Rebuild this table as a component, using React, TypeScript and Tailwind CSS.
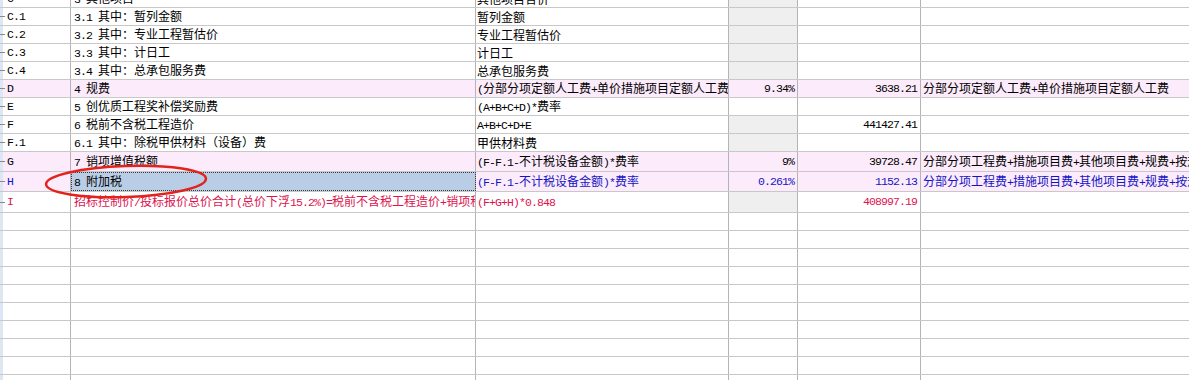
import React from 'react';

type Tone = 'normal' | 'pink' | 'blue' | 'red';

interface Row {
  code: string;
  name: string;
  base: string;
  rate: string;
  amount: string;
  remark: string;
  tone: Tone;
  gray: boolean;
  h: string;
}

const rows: Row[] = [
  { code: 'C', name: '3 其他项目', base: '其他项目合价', rate: '', amount: '', remark: '', tone: 'normal', gray: true, h: 'h-[18px]' },
  { code: 'C.1', name: '3.1 其中：暂列金额', base: '暂列金额', rate: '', amount: '', remark: '', tone: 'normal', gray: true, h: 'h-[18px]' },
  { code: 'C.2', name: '3.2 其中：专业工程暂估价', base: '专业工程暂估价', rate: '', amount: '', remark: '', tone: 'normal', gray: true, h: 'h-[18px]' },
  { code: 'C.3', name: '3.3 其中：计日工', base: '计日工', rate: '', amount: '', remark: '', tone: 'normal', gray: true, h: 'h-[18px]' },
  { code: 'C.4', name: '3.4 其中：总承包服务费', base: '总承包服务费', rate: '', amount: '', remark: '', tone: 'normal', gray: true, h: 'h-[18px]' },
  { code: 'D', name: '4 规费', base: '(分部分项定额人工费+单价措施项目定额人工费)', rate: '9.34%', amount: '3638.21', remark: '分部分项定额人工费+单价措施项目定额人工费', tone: 'pink', gray: false, h: 'h-[18px]' },
  { code: 'E', name: '5 创优质工程奖补偿奖励费', base: '(A+B+C+D)*费率', rate: '', amount: '', remark: '', tone: 'normal', gray: false, h: 'h-[18px]' },
  { code: 'F', name: '6 税前不含税工程造价', base: 'A+B+C+D+E', rate: '', amount: '441427.41', remark: '', tone: 'normal', gray: true, h: 'h-[18px]' },
  { code: 'F.1', name: '6.1 其中：除税甲供材料（设备）费', base: '甲供材料费', rate: '', amount: '', remark: '', tone: 'normal', gray: true, h: 'h-[18px]' },
  { code: 'G', name: '7 销项增值税额', base: '(F-F.1-不计税设备金额)*费率', rate: '9%', amount: '39728.47', remark: '分部分项工程费+措施项目费+其他项目费+规费+按规定不计税的工程设备金额', tone: 'pink', gray: false, h: 'h-[20px]' },
  { code: 'H', name: '8 附加税', base: '(F-F.1-不计税设备金额)*费率', rate: '0.261%', amount: '1152.13', remark: '分部分项工程费+措施项目费+其他项目费+规费+按规定不计税的工程设备金额', tone: 'blue', gray: false, h: 'h-[20px]' },
  { code: 'I', name: '招标控制价/投标报价总价合计(总价下浮15.2%)=税前不含税工程造价+销项税额+附加税', base: '(F+G+H)*0.848', rate: '', amount: '408997.19', remark: '', tone: 'red', gray: true, h: 'h-[21px]' },
];

// half-width ascii like the sheet's bitmap font: 6px advance
const mono = "font-['Liberation_Mono'] text-[11.5px] tracking-[-0.9px]";
const cell = 'flex items-center overflow-hidden whitespace-nowrap border-r border-[#b4b4b4]';

function Mixed({ text }: { text: string }) {
  const parts = text.split(/([\x20-\x7e]+)/).filter(Boolean);
  return (
    <span className="whitespace-pre">
      {parts.map((p, i) =>
        /^[\x20-\x7e]+$/.test(p) ? (
          <span key={i} className={mono}>{p}</span>
        ) : (
          <span key={i}>{p}</span>
        )
      )}
    </span>
  );
}

const toneText: Record<Tone, string> = {
  normal: 'text-black',
  pink: 'text-black',
  blue: 'text-[#1414c4]',
  red: 'text-[#dc1450]',
};

function SheetRow({ row }: { row: Row }) {
  const pinkBg = row.tone === 'pink' || row.tone === 'blue';
  const color = toneText[row.tone];
  return (
    <div
      className={`grid grid-cols-[71px_405px_253px_69px_123px_1fr] border-b border-[#c8c8c8] ${row.h} ${pinkBg ? 'bg-[#fcecfb]' : 'bg-white'}`}
    >
      <div className={`${cell} bg-[linear-gradient(to_right,#dde7f3_3px,transparent_3px)] ${color}`}>
        <span className="w-[5px] h-px bg-[#8a8a8a] shrink-0" />
        <span className={`ml-[2px] ${mono}`}>{row.code}</span>
      </div>
      <div
        className={`${cell} pl-[3px] ${
          row.tone === 'blue'
            ? 'bg-[#b9cde6] text-black outline-1 outline-dotted outline-[#3a3a3a] -outline-offset-1'
            : color
        }`}
      >
        <Mixed text={row.name} />
      </div>
      <div className={`${cell} pl-[1px] ${color}`}>
        <Mixed text={row.base} />
      </div>
      <div className={`${cell} justify-end pr-[3px] ${row.gray ? 'bg-[#efefef]' : ''} ${color}`}>
        <span className={mono}>{row.rate}</span>
      </div>
      <div className={`${cell} justify-end pr-[3px] ${color}`}>
        <span className={mono}>{row.amount}</span>
      </div>
      <div className={`${cell} pl-[2px] border-r-0 ${color}`}>
        <Mixed text={row.remark} />
      </div>
    </div>
  );
}

function EmptyRow() {
  return (
    <div className="grid grid-cols-[71px_405px_253px_69px_123px_1fr] h-[18px] border-b border-[#c8c8c8] bg-white">
      <div className={`${cell} bg-[linear-gradient(to_right,#dde7f3_3px,transparent_3px)]`} />
      <div className={cell} />
      <div className={cell} />
      <div className={cell} />
      <div className={cell} />
      <div className={`${cell} border-r-0`} />
    </div>
  );
}

export default function App() {
  return (
    <div className="relative w-[1189px] h-[380px] overflow-hidden bg-white font-['Noto_Sans_CJK_SC',sans-serif] text-[12px] leading-none">
      <div className="-mt-[10px] flex flex-col">
        {rows.map(r => (
          <SheetRow key={r.code} row={r} />
        ))}
        {Array.from({ length: 10 }).map((_, i) => (
          <EmptyRow key={i} />
        ))}
      </div>
      <svg
        className="absolute left-[40px] top-[160px] pointer-events-none"
        width="175"
        height="45"
        viewBox="0 0 175 45"
      >
        <ellipse
          cx="86"
          cy="21.5"
          rx="80"
          ry="15.5"
          fill="none"
          stroke="#e2231c"
          strokeWidth="2.5"
          transform="rotate(-2 86 21.5)"
        />
      </svg>
    </div>
  );
}
